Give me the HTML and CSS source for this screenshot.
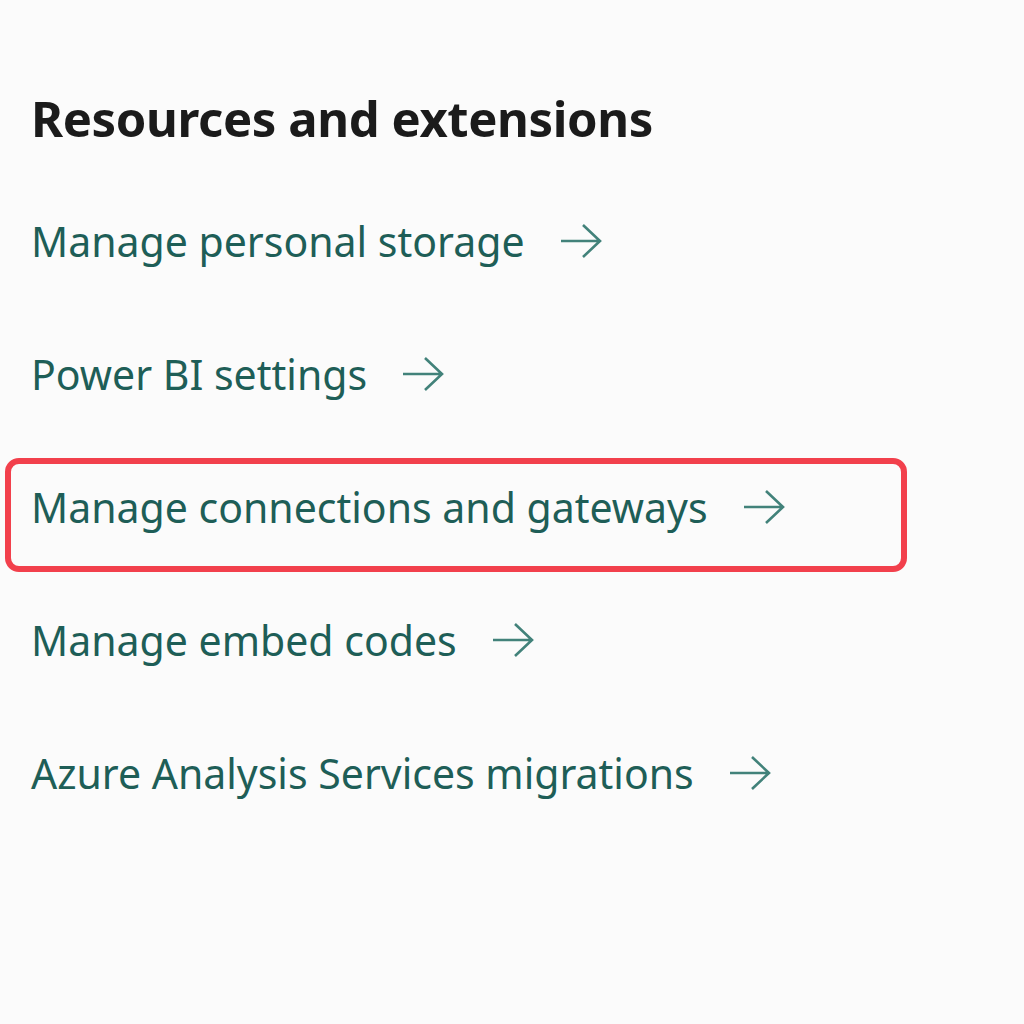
FILE: index.html
```html
<!DOCTYPE html>
<html>
<head>
<meta charset="utf-8">
<link rel="stylesheet" href="styles.css">
</head>
<body>
<main class="panel">
  <h1 class="title">Resources and extensions</h1>
  <ul class="links">
    <li class="item"><a class="link" href="#">Manage personal storage<svg class="arrow" viewBox="0 0 44 36"><path d="M2 18H41M24 2L41 18L24 34"/></svg></a></li>
    <li class="item"><a class="link" href="#">Power BI settings<svg class="arrow" viewBox="0 0 44 36"><path d="M2 18H41M24 2L41 18L24 34"/></svg></a></li>
    <li class="item highlighted"><a class="link" href="#">Manage connections and gateways<svg class="arrow" viewBox="0 0 44 36"><path d="M2 18H41M24 2L41 18L24 34"/></svg></a></li>
    <li class="item"><a class="link" href="#">Manage embed codes<svg class="arrow" viewBox="0 0 44 36"><path d="M2 18H41M24 2L41 18L24 34"/></svg></a></li>
    <li class="item"><a class="link" href="#">Azure Analysis Services migrations<svg class="arrow" viewBox="0 0 44 36"><path d="M2 18H41M24 2L41 18L24 34"/></svg></a></li>
  </ul>
</main>
</body>
</html>
```
FILE: styles.css
```css
html, body {
  margin: 0;
  padding: 0;
  background: #fbfbfb;
}
body {
  width: 1024px;
  height: 1024px;
  overflow: hidden;
  font-family: "Noto Sans", "Open Sans", sans-serif;
}
.panel {
  padding: 86px 0 0 31px;
}
.title {
  margin: 0;
  font-size: 49px;
  font-weight: 700;
  color: #1b1b1b;
  line-height: 64px;
  letter-spacing: -0.4px;
}
.links {
  list-style: none;
  margin: 0;
  padding: 0;
  margin-top: 61px;
}
.item {
  height: 133px;
  display: flex;
  align-items: flex-start;
}
.link {
  display: flex;
  align-items: center;
  gap: 34px;
  font-size: 41px;
  line-height: 60px;
  color: #1e5e57;
  text-decoration: none;
}
.arrow {
  width: 44px;
  height: 38px;
  fill: none;
  stroke: #42827a;
  stroke-width: 2.6;
}
.highlighted {
  position: relative;
}
.highlighted::before {
  content: "";
  position: absolute;
  left: -26px;
  top: -19px;
  width: 890px;
  height: 102px;
  border: 6px solid #f2404c;
  border-radius: 14px;
}
```
